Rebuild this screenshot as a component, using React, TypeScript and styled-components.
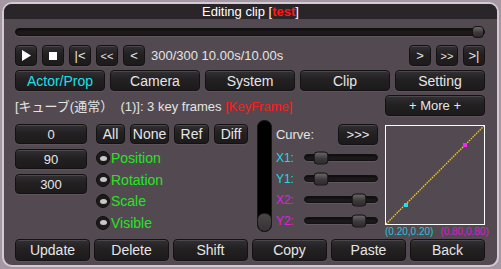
import React from 'react';
import styled, { createGlobalStyle } from 'styled-components';

const GlobalStyle = createGlobalStyle`
  html, body {
    margin: 0;
    padding: 0;
    background: #a697a5;
  }
  * {
    box-sizing: border-box;
  }
`;

const Frame = styled.div`
  margin: 2px 0 0 2px;
  width: 497px;
  height: 265px;
  border: 2px solid #d3cbd2;
  border-radius: 10px;
  background: #524a50;
  overflow: hidden;
  font-family: 'Liberation Sans', Arial, 'Noto Sans CJK JP', sans-serif;
  color: #e4e4e4;
  display: flex;
  flex-direction: column;
`;

const TitleBar = styled.div`
  height: 15px;
  background: #2a2528;
  color: #ffffff;
  font-size: 13px;
  line-height: 15px;
  text-align: center;
`;

const Red = styled.span<{ $bold?: boolean }>`
  color: #ff1a1a;
  font-weight: ${p => (p.$bold ? 700 : 400)};
`;

const Content = styled.div`
  padding: 0 12px 0 11px;
  display: flex;
  flex-direction: column;
`;

const TimelineRow = styled.div`
  height: 23px;
  display: flex;
  align-items: center;
  margin-top: 1px;
`;

const Track = styled.div<{ $h?: number }>`
  position: relative;
  flex: 1;
  height: ${p => p.$h ?? 7}px;
  background: #1d191b;
  border: 1px solid #121011;
  border-radius: 4px;
  box-shadow: inset 0 1px 2px rgba(0, 0, 0, 0.6), 0 1px 0 rgba(255, 255, 255, 0.08);
`;

const Knob = styled.div<{ $w: number; $h: number }>`
  position: absolute;
  top: 50%;
  transform: translate(-50%, -50%);
  width: ${p => p.$w}px;
  height: ${p => p.$h}px;
  border-radius: 4px;
  background: linear-gradient(#6a6668, #3e3a3c 55%, #2e2a2c);
  border: 1px solid #151213;
`;

const Row = styled.div<{ $h?: number; $gap?: number; $mt?: number }>`
  display: flex;
  align-items: center;
  height: ${p => p.$h ?? 21}px;
  gap: ${p => p.$gap ?? 5}px;
  margin-top: ${p => p.$mt ?? 0}px;
`;

const Btn = styled.div<{ $w?: number; $h?: number; $color?: string; $fs?: number }>`
  width: ${p => (p.$w ? `${p.$w}px` : 'auto')};
  ${p => (p.$w ? '' : 'flex: 1;')}
  height: ${p => p.$h ?? 21}px;
  flex-shrink: 0;
  display: flex;
  align-items: center;
  justify-content: center;
  background: linear-gradient(#323033, #232022 45%, #1d1a1c);
  border: 1px solid #141113;
  border-radius: 4px;
  box-shadow: inset 0 1px 0 rgba(255, 255, 255, 0.12), 0 1px 0 rgba(255, 255, 255, 0.06);
  color: ${p => p.$color ?? '#e6e6e6'};
  font-size: ${p => p.$fs ?? 13}px;
  white-space: nowrap;
`;

const TimeText = styled.div`
  font-size: 13px;
  margin-left: 1px;
  flex: 1;
`;

const InfoText = styled.div`
  flex: 1;
  font-size: 13px;
  color: #e4e4e4;
  white-space: pre;
`;

const Main = styled.div`
  display: flex;
  height: 118px;
  margin-top: 4px;
`;

const LeftCol = styled.div`
  width: 72px;
  display: flex;
  flex-direction: column;
  gap: 5px;
  padding-top: 4px;
`;

const MidCol = styled.div`
  width: 156px;
  margin-left: 9px;
  display: flex;
  flex-direction: column;
  padding-top: 4px;
`;

const Checks = styled.div`
  display: flex;
  flex-direction: column;
  gap: 5.5px;
  margin-top: 6px;
`;

const CheckRow = styled.div`
  display: flex;
  align-items: center;
  height: 16px;
  color: #22e622;
  font-size: 14px;
`;

const Radio = styled.div`
  width: 14px;
  height: 14px;
  border-radius: 50%;
  background: #1e1a1c;
  border: 1px solid #110e10;
  display: flex;
  align-items: center;
  justify-content: center;
  margin-right: 1px;
  &::after {
    content: '';
    width: 7px;
    height: 5px;
    border-radius: 50%;
    background: #c8c8c8;
  }
`;

const VSlider = styled.div`
  width: 15px;
  height: 112px;
  margin: 0 4px 0 8px;
  border-radius: 7px;
  background: #000;
  border: 1px solid #1a1718;
  display: flex;
  flex-direction: column;
  justify-content: flex-end;
  overflow: hidden;
`;

const VKnob = styled.div`
  height: 18px;
  border-radius: 6px;
  background: linear-gradient(#4a4648, #363234);
  border-top: 1px solid #222;
`;

const CurveCol = styled.div`
  width: 104px;
  display: flex;
  flex-direction: column;
  padding-top: 4px;
`;

const CurveHead = styled.div`
  display: flex;
  align-items: center;
  justify-content: space-between;
  height: 21px;
  font-size: 13px;
  color: #e4e4e4;
  margin-bottom: 2px;
`;

const ParamRow = styled.div<{ $color: string }>`
  display: flex;
  align-items: center;
  height: 21px;
  color: ${p => p.$color};
  font-size: 12px;
`;

const ParamLabel = styled.div`
  width: 28px;
`;

const GraphCol = styled.div`
  width: 100px;
  margin-left: 7px;
  display: flex;
  flex-direction: column;
  padding-top: 5px;
`;

const GraphBox = styled.div`
  width: 100px;
  height: 100px;
  border: 1px solid #ffffff;
`;

const GraphLabels = styled.div`
  display: flex;
  gap: 7px;
  font-size: 10px;
  margin-top: 1px;
  white-space: nowrap;
`;

const Lbl = styled.span<{ $color: string }>`
  color: ${p => p.$color};
`;

const BottomRow = styled.div`
  display: flex;
  gap: 4px;
  height: 22px;
  margin-top: 1px;
`;

const PlayIcon = () => (
  <svg width="9" height="11" viewBox="0 0 9 11">
    <polygon points="0,0 9,5.5 0,11" fill="#fff" />
  </svg>
);

const StopIcon = () => (
  <svg width="8" height="8" viewBox="0 0 8 8">
    <rect width="8" height="8" fill="#fff" />
  </svg>
);

const HSlider = ({ pos }: { pos: number }) => (
  <Track>
    <Knob $w={15} $h={13} style={{ left: `${pos}%` }} />
  </Track>
);

const tabs = ['Actor/Prop', 'Camera', 'System', 'Clip', 'Setting'];
const numbers = ['0', '90', '300'];
const checks = ['Position', 'Rotation', 'Scale', 'Visible'];
const params = [
  { label: 'X1:', color: '#22d8e0', pos: 23 },
  { label: 'Y1:', color: '#22d8e0', pos: 23 },
  { label: 'X2:', color: '#e020e0', pos: 75 },
  { label: 'Y2:', color: '#e020e0', pos: 75 },
];
const actions = ['Update', 'Delete', 'Shift', 'Copy', 'Paste', 'Back'];

const App: React.FC = () => {
  return (
    <>
      <GlobalStyle />
      <Frame>
        <TitleBar>
          Editing clip [<Red $bold>test</Red>]
        </TitleBar>
        <Content>
          <TimelineRow>
            <Track $h={8}>
              <Knob $w={12} $h={12} style={{ left: 'calc(100% - 6px)' }} />
            </Track>
          </TimelineRow>

          <Row $mt={2}>
            <Btn $w={22}><PlayIcon /></Btn>
            <Btn $w={22}><StopIcon /></Btn>
            <Btn $w={22}>|&lt;</Btn>
            <Btn $w={22} $fs={11}>&lt;&lt;</Btn>
            <Btn $w={22}>&lt;</Btn>
            <TimeText>300/300 10.00s/10.00s</TimeText>
            <Btn $w={22}>&gt;</Btn>
            <Btn $w={22} $fs={11}>&gt;&gt;</Btn>
            <Btn $w={22}>&gt;|</Btn>
          </Row>

          <Row $mt={4}>
            {tabs.map((t, i) => (
              <Btn key={t} $color={i === 0 ? '#1ae0ea' : undefined} $fs={14}>
                {t}
              </Btn>
            ))}
          </Row>

          <Row $mt={4}>
            <InfoText>
              {'[キューブ(通常）  (1)]: 3 key frames '}<Red>[KeyFrame]</Red>
            </InfoText>
            <Btn $w={100} $fs={13}>+ More +</Btn>
          </Row>

          <Main>
            <LeftCol>
              {numbers.map(n => (
                <Btn key={n} $w={72} $h={20}>{n}</Btn>
              ))}
            </LeftCol>

            <MidCol>
              <Row $h={20} $gap={5}>
                <Btn $w={29} $h={20} $fs={14}>All</Btn>
                <Btn $w={39} $h={20} $fs={14}>None</Btn>
                <Btn $w={35} $h={20} $fs={14}>Ref</Btn>
                <Btn $w={34} $h={20} $fs={14}>Diff</Btn>
              </Row>
              <Checks>
                {checks.map(c => (
                  <CheckRow key={c}>
                    <Radio />
                    {c}
                  </CheckRow>
                ))}
              </Checks>
            </MidCol>

            <VSlider>
              <VKnob />
            </VSlider>

            <CurveCol>
              <CurveHead>
                <span>Curve:</span>
                <Btn $w={40} $h={21} $fs={13}>&gt;&gt;&gt;</Btn>
              </CurveHead>
              {params.map(p => (
                <ParamRow key={p.label} $color={p.color}>
                  <ParamLabel>{p.label}</ParamLabel>
                  <HSlider pos={p.pos} />
                </ParamRow>
              ))}
            </CurveCol>

            <GraphCol>
              <GraphBox>
                <svg width="98" height="98" viewBox="0 0 98 98">
                  <line x1="0" y1="98" x2="98" y2="0" stroke="#ffd400" strokeWidth="1.3" strokeDasharray="1.5 1" />
                  <rect x="18" y="77" width="4" height="4" fill="#22e0e8" />
                  <rect x="77" y="17" width="4" height="4" fill="#ff22ff" />
                </svg>
              </GraphBox>
              <GraphLabels>
                <Lbl $color="#22c8d8">(0.20,0.20)</Lbl>
                <Lbl $color="#d020d0">(0.80,0.80)</Lbl>
              </GraphLabels>
            </GraphCol>
          </Main>

          <BottomRow>
            {actions.map(a => (
              <Btn key={a} $h={22} $fs={14}>{a}</Btn>
            ))}
          </BottomRow>
        </Content>
      </Frame>
    </>
  );
};

export default App;
